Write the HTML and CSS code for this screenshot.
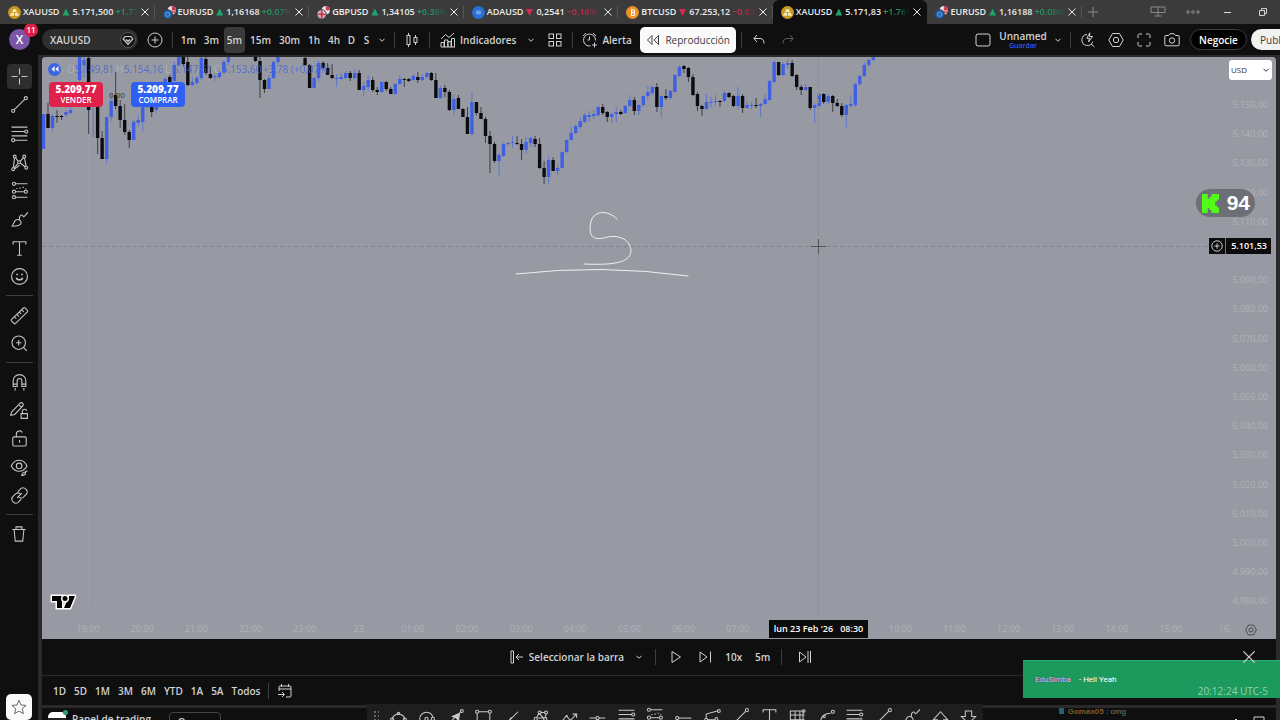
FILE: index.html
```html
<!DOCTYPE html>
<html lang="es">
<head>
<meta charset="utf-8">
<title>XAUUSD</title>
<link rel="stylesheet" href="styles.css">
</head>
<body>
<svg class="defs" aria-hidden="true">
  <symbol id="x" viewBox="0 0 10 10"><path d="M1.5 1.5l7 7M8.500 1.500l-7 7"/></symbol>
  <symbol id="chev" viewBox="0 0 8 8"><path d="M1.500 2.800l2.500 2.500 2.500-2.500"/></symbol>
  <symbol id="gold" viewBox="0 0 14 14"><circle cx="7" cy="7" r="7" fill="#c99a22" stroke="none"/><path d="M5.500 3.500h3l1 3h-5zM3.500 7.200h3v3.200h-4.500zM7.500 7.200h3l1.500 3.200h-4.500z" fill="#f5e9c4" stroke="none"/></symbol>
  <symbol id="eur" viewBox="0 0 14 14"><circle cx="9.500" cy="4.500" r="4.500" fill="#e8e3ea" stroke="none"/><path d="M9.500 0a4.500 4.500 0 0 1 4.500 4.500h-4.500z" fill="#c93a4c" stroke="none"/><path d="M9 7h5M9 5.500h5" stroke="#c93a4c"/><circle cx="5" cy="9" r="5" fill="#1c61b4" stroke="#3b3b3b"/><circle cx="5" cy="9" r="2.200" stroke="#6fa8df"/></symbol>
  <symbol id="gbp" viewBox="0 0 14 14"><circle cx="9.500" cy="4.500" r="4.500" fill="#e8e3ea" stroke="none"/><path d="M9.500 0a4.500 4.500 0 0 1 4.500 4.500h-4.500z" fill="#c93a4c" stroke="none"/><circle cx="5" cy="9" r="5" fill="#e8d9de" stroke="#3b3b3b"/><path d="M5 4.500v9M.5 9h9" stroke="#c8334a" stroke-width="2"/><path d="M2 6l1 1M8 6l-1 1M2 12l1-1M8 12l-1-1" stroke="#31539b"/></symbol>
  <symbol id="ada" viewBox="0 0 14 14"><circle cx="7" cy="7" r="7" fill="#2a6fd6" stroke="none"/><path d="M4.500 5.500h5M4.500 8.500h5M4 7h6" stroke="#a9c8f5" stroke-width=".8"/></symbol>
  <symbol id="btc" viewBox="0 0 14 14"><circle cx="7" cy="7" r="7" fill="#ee9129" stroke="none"/><path d="M5.500 4h2.200a1.500 1.500 0 0 1 0 3H5.800h2.200a1.500 1.500 0 0 1 0 3.200H5.200M6 3v8" stroke="#fff" stroke-width="1.200"/></symbol>
  <symbol id="cross" viewBox="0 0 24 24"><path d="M12 2v7.500M12 14.500V22M2 12h7.500M14.500 12H22"/></symbol>
  <symbol id="line" viewBox="0 0 24 24"><circle cx="4" cy="20" r="2"/><circle cx="20" cy="4" r="2"/><path d="M5.500 18.500l13-13"/></symbol>
  <symbol id="fib" viewBox="0 0 24 24"><path d="M2 4h20M2 9.500h16.500M2 15h20M6 20.500h16"/><circle cx="20.500" cy="9.500" r="2"/><circle cx="4" cy="20.500" r="2"/></symbol>
  <symbol id="pattern" viewBox="0 0 24 24"><circle cx="6" cy="4.500" r="1.800"/><circle cx="18" cy="4.500" r="1.800"/><circle cx="4" cy="20.500" r="1.800"/><circle cx="20.500" cy="18.500" r="1.800"/><circle cx="11.500" cy="11.500" r="1.800"/><path d="M5.700 6.300l-1.500 12.400M7 6l3.300 4.200M13 10.200l4-4.200M18.300 6.300l2 10.500M10.200 13l-5 6M13 12.600l6 4.700M6 20l6-4.500"/></symbol>
  <symbol id="range" viewBox="0 0 24 24"><circle cx="5" cy="3.500" r="2"/><circle cx="5" cy="13.500" r="2"/><circle cx="5" cy="20.500" r="2"/><circle cx="20" cy="13.500" r="2"/><path d="M7 3.500h15M7 13.500h11M7 20.500h15M8 9.500h1.500M12 9h1.500M16 8h1.500M19.500 9.500h1"/></symbol>
  <symbol id="brush" viewBox="0 0 24 24"><path d="M2 20.500c3 0 2-8 7-8.500 3-.5 5 2 5 4 0 4-5 4.500-12 4.500zM12 12c-1-5 3-7 4-5s1 3 6.500-4"/></symbol>
  <symbol id="text" viewBox="0 0 24 24"><path d="M4 7V3.500h16V7M12 3.500v17M9 20.500h6"/></symbol>
  <symbol id="smile" viewBox="0 0 24 24"><circle cx="12" cy="12" r="10"/><path d="M8 13.500c1 3.500 7 3.500 8 0M9 8.500v2M15 8.500v2" stroke-width="2"/></symbol>
  <symbol id="ruler" viewBox="0 0 24 24"><path d="M2 17L17 2.500q1-1 2 0l3 3q1 1 0 2L7 22q-1 1-2 0l-3-3q-1-1 0-2zM6 14l2 2M9 11l2.500 2.500M12 8l2 2M15 5l2.500 2.500"/></symbol>
  <symbol id="zoom" viewBox="0 0 24 24"><circle cx="11" cy="11" r="8.500"/><path d="M17.300 17.300l4 4M7.500 11h7M11 7.500v7"/></symbol>
  <symbol id="magnet" viewBox="0 0 24 24"><path d="M4 17V10a8 8 0 0 1 16 0v7h-5v-7a3 3 0 0 0-6 0v7zM4 14h5M15 14h5M6.500 19v3M17.500 19v3"/></symbol>
  <symbol id="penlock" viewBox="0 0 24 24"><path d="M2 14L13 2.500q1.500-1 3 .5t.5 3L6 17l-5 1zM11 4.500l4 4M14 16h8v6h-8zM15.500 16v-3q.5-2.500 3-2.500t2.500 2"/></symbol>
  <symbol id="lock" viewBox="0 0 24 24"><rect x="3.500" y="10" width="17" height="11.500" rx="1.500"/><path d="M8 10V6.500a4 4 0 0 1 7.500-2M12 14v3.500"/></symbol>
  <symbol id="eye" viewBox="0 0 24 24"><path d="M1.500 10c5-9.500 15-9.500 20 0-5 9-15 9-20 0z"/><circle cx="11.500" cy="10" r="3.500"/><path d="M14 22c2 0 1-4 4-4s2 4-4 4zM19 18l3-2"/></symbol>
  <symbol id="link" viewBox="0 0 24 24"><path d="M10 7l4-4q3-2 6 1t1 6l-4 4q-3 2.500-6 0M14 17l-4 4q-3 2-6-1t-1-6l4-4q3-2.500 6 0M9 15l6-6"/></symbol>
  <symbol id="trash" viewBox="0 0 24 24"><path d="M3 6h18M5.500 6l1.500 15.500h10L18.500 6M8 6V2.500h8V6"/></symbol>
  <symbol id="star" viewBox="0 0 24 24"><path d="M12 2l3 7 7.500.6-5.700 5 1.800 7.400-6.600-4-6.600 4 1.800-7.400-5.700-5L9 9z"/></symbol>
  <symbol id="gem" viewBox="0 0 16 16"><circle cx="8" cy="8" r="7.500" fill="#171717" stroke="#555"/><path d="M5 4.500h6l1.800 2.500L8 12.300 3.200 7zM6 7.500l2 2 2-2" stroke-width="1.200"/></symbol>
  <symbol id="plus" viewBox="0 0 16 16"><circle cx="8" cy="8" r="7"/><path d="M4.500 8h7M8 4.500v7"/></symbol>
  <symbol id="candles" viewBox="0 0 16 16"><rect x="3" y="3.500" width="3" height="9"/><rect x="10" y="5.500" width="3" height="5"/><path d="M4.500 1v2.500M4.500 12.500V15M11.500 3v2.500M11.500 10.500V13"/></symbol>
  <symbol id="indic" viewBox="0 0 16 16"><path d="M1 15V10.500h3V15M4.500 15V8h3.300v7M8 15V9.500h3V15M11.500 15V6.500h3V15M1 15h14M1 7l4.500-4.500 3.500 3L14 1"/></symbol>
  <symbol id="grid" viewBox="0 0 16 16"><rect x="2" y="2" width="4.500" height="4.500"/><rect x="9.500" y="2" width="4.500" height="4.500"/><rect x="2" y="9.500" width="4.500" height="4.500"/><rect x="9.500" y="9.500" width="4.500" height="4.500"/></symbol>
  <symbol id="alarm" viewBox="0 0 16 16"><path d="M8.500 14A6 6 0 1 1 13.500 8.500M7.500 4.500V8h-2M1 4l3-3M11 1l3 3M12.500 10.500v5M10 13h5"/></symbol>
  <symbol id="rew" viewBox="0 0 16 16"><path d="M7 3.500v9L2.500 8zM13.500 3.500v9L9 8z"/></symbol>
  <symbol id="undo" viewBox="0 0 16 16"><path d="M6 3L3 6.500 6 10M3 6.500h6q4 0 4 5"/></symbol>
  <symbol id="redo" viewBox="0 0 16 16"><path d="M10 3l3 3.500-3 3.500M13 6.500H7q-4 0-4 5"/></symbol>
  <symbol id="square" viewBox="0 0 16 16"><rect x="1" y="2" width="14" height="12" rx="2"/></symbol>
  <symbol id="quick" viewBox="0 0 16 16"><path d="M7 2.500a5.500 5.500 0 1 0 5.700 7M11 12l3.500 3M9.800.8L6.800 6.300h2.700L8.500 10l4-5.500h-3z"/></symbol>
  <symbol id="hex" viewBox="0 0 16 16"><path d="M4.500 1.500h7L15.200 8l-3.700 6.500h-7L.8 8z"/><circle cx="8" cy="8" r="2.700"/></symbol>
  <symbol id="full" viewBox="0 0 16 16"><path d="M2 6V3.500Q2 2 3.500 2H6M10 2h2.500Q14 2 14 3.500V6M14 10v2.500q0 1.500-1.500 1.500H10M6 14H3.500Q2 14 2 12.500V10"/></symbol>
  <symbol id="camera" viewBox="0 0 16 16"><path d="M.8 4.500Q.8 3.500 2 3.500h2.500L6 1.700h4l1.500 1.800H14q1.200 0 1.200 1v8q0 1.300-1.200 1.300H2q-1.200 0-1.200-1.300z"/><circle cx="8" cy="8.500" r="2.700"/></symbol>
  <symbol id="screens" viewBox="0 0 16 12"><path d="M1 1h14v5.500H1zM8 1v9M4.500 10h7"/></symbol>
  <symbol id="dots" viewBox="0 0 16 6"><circle cx="3" cy="3" r="1.300"/><circle cx="8" cy="3" r="1.300"/><circle cx="13" cy="3" r="1.300"/></symbol>
  <symbol id="restore" viewBox="0 0 10 10"><path d="M1.500 3.500h5v5h-5zM3.500 3V1.500h5v5H7"/></symbol>
  <symbol id="bar" viewBox="0 0 16 16"><path d="M2 2h2.500v12H2zM7 8h7M10 5L7 8l3 3"/></symbol>
  <symbol id="play" viewBox="0 0 16 16"><path d="M4 2.500l8.500 5.500L4 13.500z"/></symbol>
  <symbol id="step" viewBox="0 0 16 16"><path d="M3 3l7 5-7 5zM13.500 2.500v11"/></symbol>
  <symbol id="last" viewBox="0 0 16 16"><path d="M2.500 3l6.500 5-6.500 5zM11 2v12M13.500 2v12"/></symbol>
  <symbol id="cal" viewBox="0 0 16 16"><path d="M2 8V4q0-1 1-1h10q1 0 1 1v9q0 1-1 1H9M2 6h12M4.500 1v3M11.500 1v3M1 11.500h6M5 9l2.500 2.500L5 14"/></symbol>
  <symbol id="b-ell" viewBox="0 0 24 24"><path d="M4 16a8 7 0 0 1 16 0"/><circle cx="12" cy="8" r="1.500"/><circle cx="4" cy="16" r="2"/><circle cx="20" cy="16" r="2"/></symbol>
  <symbol id="b-circ" viewBox="0 0 24 24"><circle cx="12" cy="15" r="8.500"/><circle cx="12" cy="15" r="2"/><circle cx="20" cy="15" r="2" fill="#1e1e1e"/></symbol>
  <symbol id="b-arrow" viewBox="0 0 24 24"><path d="M4 21l7-8M16 9l3-3"/><path d="M8 12l9-4-1 9-3-3z" fill="currentColor"/><circle cx="20" cy="5" r="1.800"/></symbol>
  <symbol id="b-rect" viewBox="0 0 24 24"><path d="M4 8v14M20 8v14M6 6h12"/><circle cx="4" cy="6" r="2"/><circle cx="20" cy="6" r="2"/></symbol>
  <symbol id="b-brush" viewBox="0 0 24 24"><path d="M19 6L9 16M12 13c-4 0-3 5-7 7"/></symbol>
  <symbol id="b-poly" viewBox="0 0 24 24"><path d="M7 14l3-6M12 7h6M19 9l-1 5M9 14h7l-6-6"/><circle cx="6" cy="15" r="2"/><circle cx="11" cy="7" r="2"/><circle cx="19" cy="7" r="2"/><circle cx="18" cy="15" r="2"/></symbol>
  <symbol id="b-zig" viewBox="0 0 24 24"><path d="M2 19l6-8 5 6 8-8M16 9h5v5M7 11h3"/></symbol>
  <symbol id="b-hor" viewBox="0 0 24 24"><path d="M2 14h8M14 14h8"/><circle cx="12" cy="14" r="2"/></symbol>
  <symbol id="b-ray" viewBox="0 0 24 24"><path d="M6 14h16"/><circle cx="4" cy="14" r="2"/></symbol>
  <symbol id="b-fan" viewBox="0 0 24 24"><path d="M4 15V9l14-4M5 16h10"/><circle cx="20" cy="5" r="1.800"/><circle cx="4" cy="16" r="1.800"/><circle cx="17" cy="15" r="1.800"/></symbol>
  <symbol id="b-table" viewBox="0 0 24 24"><path d="M3 5h16v17H3zM3 10h18M3 16h18M9 5v17M15 5v17"/><circle cx="20" cy="5" r="1.500"/></symbol>
  <symbol id="b-curve" viewBox="0 0 24 24"><path d="M4 20C5 12 10 8 17 8"/><circle cx="20" cy="6" r="2"/><circle cx="9" cy="12" r="1.500"/></symbol>
  <symbol id="b-tri" viewBox="0 0 24 24"><path d="M12 6l9 10h-5v6H8v-6H3z"/></symbol>
  <symbol id="b-down" viewBox="0 0 24 24"><path d="M8 5h8v7h5l-9 9-9-9h5z"/></symbol>
</svg>

<nav class="tabs">
  <div class="tab-list" id="tab-list"></div>
  <button class="win new" aria-label="Nueva pestaña"><svg class="i16"><path d="M8 3v10M3 8h10"/></svg></button>
  <span class="grow"></span>
  <button class="win" aria-label="Pantallas"><svg class="i16 dim"><use href="#screens"/></svg></button>
  <button class="win more" aria-label="Más"><svg class="i16 dim"><use href="#dots"/></svg></button>
  <button class="win" aria-label="Minimizar"><span class="dash"></span></button>
  <button class="win" aria-label="Restaurar"><svg class="i10"><use href="#restore"/></svg></button>
</nav>

<header class="toolbar">
  <button class="avatar">X<span class="badge">11</span></button>
  <button class="symbol">XAUUSD<svg class="i16"><use href="#gem"/></svg></button>
  <button class="tool w34" aria-label="Comparar"><svg class="i16"><use href="#plus"/></svg></button>
  <i class="sep"></i>
  <div class="frames">
    <button>1m</button><button>3m</button><button class="on">5m</button><button class="wide">15m</button><button class="wide">30m</button><button class="slim">1h</button><button class="slim">4h</button><button class="one">D</button><button class="one">S</button><button class="one" aria-label="Intervalos"><svg class="i8"><use href="#chev"/></svg></button>
  </div>
  <i class="sep"></i>
  <button class="tool w34" aria-label="Velas"><svg class="i16"><use href="#candles"/></svg></button>
  <i class="sep"></i>
  <button class="tool label indic"><svg class="i16"><use href="#indic"/></svg>Indicadores</button>
  <button class="tool w24" aria-label="Favoritos"><svg class="i8"><use href="#chev"/></svg></button>
  <button class="tool w24" aria-label="Plantillas"><svg class="i16"><use href="#grid"/></svg></button>
  <i class="sep gap"></i>
  <button class="tool label alert"><svg class="i16"><use href="#alarm"/></svg>Alerta</button>
  <button class="replay"><svg class="i16"><use href="#rew"/></svg>Reproducción</button>
  <i class="sep gap"></i>
  <button class="tool w34" aria-label="Deshacer"><svg class="i16"><use href="#undo"/></svg></button>
  <button class="tool w24 faint" aria-label="Rehacer"><svg class="i16"><use href="#redo"/></svg></button>
  <span class="grow"></span>
  <button class="tool w34" aria-label="Diseño"><svg class="i16"><use href="#square"/></svg></button>
  <button class="layout">Unnamed<small>Guardar</small></button>
  <button class="tool w24" aria-label="Diseños"><svg class="i8"><use href="#chev"/></svg></button>
  <i class="sep"></i>
  <div class="actions">
    <button class="tool" aria-label="Buscar"><svg class="i16"><use href="#quick"/></svg></button>
    <button class="tool" aria-label="Ajustes"><svg class="i16"><use href="#hex"/></svg></button>
    <button class="tool" aria-label="Pantalla completa"><svg class="i16"><use href="#full"/></svg></button>
    <button class="tool" aria-label="Captura"><svg class="i16"><use href="#camera"/></svg></button>
  </div>
  <button class="trade">Negocie</button>
  <button class="publish">Publicar</button>
</header>

<main class="body">
  <aside class="side">
    <div class="set eight" data-icons="cross line fib pattern range brush text smile"></div>
    <hr>
    <div class="set two" data-icons="ruler zoom"></div>
    <hr>
    <div class="set five" data-icons="magnet penlock lock eye link"></div>
    <hr>
    <div class="set" data-icons="trash"></div>
    <span class="grow"></span>
    <button class="fav" aria-label="Favoritos"><svg class="i16"><use href="#star"/></svg></button>
  </aside>

  <section class="column">
    <div class="chart">
      <svg class="plot" id="plot"></svg>
      <div class="legend">
        <button class="back" aria-label="Reproducción"><svg class="i8" viewBox="0 0 8 8"><path d="M3.700 1v6L.5 4zM7.500 1v6L4.300 4z" fill="#fff" stroke="none"/></svg></button>
        <span><i>O</i>5.149,81</span><span><i>H</i>5.154,16</span><span><i>L</i>5.147,61</span><span><i>C</i>5.153,60</span><span>+3,78 (+0,07%)</span>
      </div>
      <div class="orders">
        <button class="sell"><b>5.209,77</b>VENDER</button>
        <span>0,00</span>
        <button class="buy"><b>5.209,77</b>COMPRAR</button>
      </div>
      <label class="currency"><select aria-label="Moneda"><option>USD</option></select><svg class="i8"><use href="#chev"/></svg></label>
      <div class="viewers"><svg viewBox="0 0 18 20"><path d="M0 0h6v5h2V3h2V0h8v6h-2v2h-2v4h2v2h2v6h-8v-3H8v-2H6v5H0z" fill="#53fc18"/></svg>94</div>
      <div class="price-tag"><svg class="i16"><use href="#plus"/></svg><span>5.101,53</span></div>
      <div class="time-tag">lun 23 Feb '26 &nbsp; 08:30</div>
      <svg class="tv" viewBox="0 0 26 16"><path d="M2 2h10v12H7V7H2zM19 2h6l-5 12h-6z" fill="#000" stroke="#fff" stroke-width="3" paint-order="stroke"/><circle cx="15" cy="4.500" r="2.500" fill="#000" stroke="#fff" stroke-width="3" paint-order="stroke"/></svg>
      <button class="axis-set" aria-label="Ajustes de escala"><svg class="i12"><use href="#hex"/></svg></button>
    </div>

    <div class="replay-bar">
      <span class="grow"></span>
      <button class="tool pick"><svg class="i16"><use href="#bar"/></svg>Seleccionar la barra<svg class="i8"><use href="#chev"/></svg></button>
      <i class="sep"></i>
      <button class="tool w29" aria-label="Reproducir"><svg class="i16"><use href="#play"/></svg></button>
      <button class="tool w29" aria-label="Avanzar"><svg class="i16"><use href="#step"/></svg></button>
      <button class="tool w29">10x</button>
      <button class="tool w29">5m</button>
      <i class="sep far"></i>
      <button class="tool w29" aria-label="Tiempo real"><svg class="i16"><use href="#last"/></svg></button>
      <span class="grow end"><button class="tool close" aria-label="Cerrar"><svg class="i16"><use href="#x"/></svg></button></span>
    </div>
    <div class="ranges">
      <button>1D</button><button>5D</button><button>1M</button><button>3M</button><button>6M</button><button>YTD</button><button>1A</button><button>5A</button><button>Todos</button>
      <i class="sep"></i>
      <button aria-label="Ir a la fecha"><svg class="i16"><use href="#cal"/></svg></button>
      <span class="grow"></span>
      <button class="clock">20:12:24 UTC-5</button>
    </div>
    <div class="bottom">
      <span class="broker"></span>
      <span class="panel-name">Panel de trading</span>
      <button class="chip">Operar</button>
      <span class="grow"></span>
      <p class="chat"><i></i><b>Gomax05</b> : omg</p>
      <svg class="ends" viewBox="0 0 40 12"><path d="M4 11l4-4 4 4M26 12V5h10v7"/></svg>
    </div>
  </section>

  <div class="toast"><b>EduSimba</b><span>- Hell Yeah</span></div>
  <div class="drawbar"><span class="grip"></span><div class="drawset" data-icons="b-ell b-circ b-arrow b-rect b-brush b-poly b-zig b-hor fib range b-ray b-fan line text b-table b-curve fib line brush b-tri b-down"></div></div>
</main>
<script src="chart.js"></script>
</body>
</html>
```
FILE: styles.css
```css
* { box-sizing: border-box; }
html, body { height: 100%; }
body {
  margin: 0;
  display: flex;
  flex-direction: column;
  overflow: hidden;
  background: #0f0f0f;
  color: #d2d2d2;
  font: 600 10px/14px "Open Sans", "Noto Sans", sans-serif;
}
button, select { font: inherit; color: inherit; background: none; border: 0; padding: 0; margin: 0; }
button { display: flex; align-items: center; justify-content: center; white-space: nowrap; flex: none; }
svg { fill: none; stroke: currentColor; flex: none; }
.defs { position: absolute; width: 0; height: 0; }
.grow { flex: 1; }
.i8 { width: 8px; height: 8px; }
.i10 { width: 10px; height: 10px; }
.i12 { width: 12px; height: 12px; }
.i16 { width: 16px; height: 16px; }
.dim { color: #8a8a8a; }

/* window tabs */
.tabs { display: flex; height: 24px; flex: none; background: #3b3b3b; }
.tab-list { flex: 0 1 1082px; display: grid; grid-template-columns: repeat(7, minmax(0, 1fr)); }
.tab { display: flex; align-items: center; gap: 2px; padding: 0 5px 0 8px; font-size: 9px; color: #ececec; position: relative; }
.tab.on { background: #0f0f0f; border-radius: 6px 6px 0 0; }
.tab > svg:first-child { width: 13px; height: 13px; }
.tab .name { font-weight: 600; }
.tab .tri { width: 7px; height: 7px; margin: 0 1px; background: #1fa36c; clip-path: polygon(50% 0, 100% 100%, 0 100%); }
.tab .pct { flex: 1; min-width: 0; overflow: hidden; white-space: nowrap; color: #1f9a68; -webkit-mask-image: linear-gradient(90deg, #000 50%, transparent); mask-image: linear-gradient(90deg, #000 50%, transparent); }
.tab.down .tri { background: #d52b50; transform: rotate(180deg); }
.tab.down .pct { color: #c92c50; }
.tab:not(.on)::after { content: ""; position: absolute; right: 0; top: 6px; height: 12px; border-right: 1px solid #555; }
.win { width: 35px; }
.new { width: 22px; color: #8a8a8a; }
.dash { width: 7px; border-top: 1px solid #ddd; }

/* main toolbar */
.toolbar { display: flex; align-items: center; height: 31px; flex: none; overflow: hidden; padding-left: 9px; }
.sep { width: 1px; height: 16px; background: #3d3d3d; flex: none; }
.sep.gap { margin-left: 5px; }
.tool { height: 26px; }
.w34 { width: 34px; }
.w29 { width: 29px; }
.w24 { width: 24px; }
.faint { color: #5c5c5c; }
.avatar { position: relative; width: 21px; height: 21px; border-radius: 50%; background: #7a55a8; color: #fff; font-size: 12px; }
.badge { position: absolute; left: 15px; top: -6px; width: 14px; height: 14px; border-radius: 50%; background: #d91f43; font-size: 8px; line-height: 14px; }
.symbol { width: 96px; height: 21px; margin-left: 12px; padding: 0 2px 0 8px; border-radius: 11px; background: #2e2e2e; justify-content: space-between; }
.frames { display: flex; margin: 0 5px 0 4px; }
.frames button { width: 23px; height: 26px; border-radius: 4px; }
.frames .on { background: #3a3a3a; width: 21px; margin: 0 1px; }
.frames .wide { width: 29px; }
.frames .slim { width: 20px; }
.frames .one { width: 15px; }
.label { gap: 4px; }
.indic { margin: 0 3px 0 10px; }
.alert { margin-left: 9px; }
.replay { width: 96px; height: 26px; margin-left: 8px; gap: 4px; border-radius: 5px; background: #fafafa; color: #3c3c3c; font-weight: 400; }
.layout { flex-direction: column; width: 46px; line-height: 12px; }
.layout small { font-size: 7px; line-height: 8px; color: #2f5bea; font-weight: 600; }
.actions { display: flex; margin: 0 4px 0 3px; }
.actions .tool { width: 28px; }
.trade { width: 57px; height: 21px; border: 1px solid #3d3d3d; border-radius: 11px; background: #000; color: #fff; }
.publish { width: 29px; height: 21px; margin-left: 4px; padding-left: 9px; border-radius: 11px 0 0 11px; background: #f2f2f2; color: #3c3c3c; justify-content: flex-start; overflow: hidden; font-weight: 400; }

/* body */
.body { position: relative; display: flex; flex: 1; min-height: 0; }
.side { width: 38px; flex: none; display: flex; flex-direction: column; padding-top: 7px; color: #c4c4c4; }
.side .set { display: grid; grid-auto-rows: 1fr; height: 28px; }
.side .eight { height: 229px; }
.side .two { height: 57px; }
.side .five { height: 142px; }
.side .set button { justify-self: center; align-self: center; width: 25px; height: 25px; border-radius: 4px; }
.side .set button svg { width: 19px; height: 19px; stroke-width: 1.400; }
.side .two svg, .side .five svg, .side .set:last-of-type svg { width: 18px; height: 18px; }
.side .eight button:first-child { background: #2e2e2e; }
.side hr { width: 27px; margin: 4px auto 5px; border: 0; border-top: 1px solid #3d3d3d; }
.fav { width: 26px; height: 26px; align-self: center; border-radius: 5px; background: #fafafa; color: #222; }
.column { flex: 1; min-width: 0; display: flex; flex-direction: column; background: #0f0f0f; border: 4px solid #2a2a2a; border-width: 2px 4px 0 4px; }
.chart { position: relative; flex: 1; min-height: 0; background: #989aa3; border-radius: 3px 3px 0 0; overflow: hidden; }
.plot { display: block; width: 100%; height: 100%; }
.plot text { fill: #b0b2ba; stroke: none; font-size: 9px; font-weight: 400; }
.legend { position: absolute; left: 6px; top: 5px; display: flex; align-items: center; gap: 1px; color: #4964d8; font-weight: 400; opacity: .85; }
.legend span { width: 48px; white-space: nowrap; }
.legend i { display: inline-block; width: 8px; font-style: normal; color: #b2b4bc; }
.back { width: 13px; height: 13px; margin-right: 5px; border-radius: 50%; background: #2b5cf2; }
.orders { position: absolute; left: 7px; top: 25px; display: flex; align-items: center; color: #333; font-weight: 400; font-size: 8px; }
.orders span { width: 28px; text-align: center; }
.orders button { width: 54px; height: 25px; flex-direction: column; border-radius: 4px; color: #fff; font-size: 8px; font-weight: 600; line-height: 10px; }
.orders b { font-size: 10px; line-height: 11px; }
.sell { background: #e0214a; }
.buy { background: #2e60f6; }
.currency { position: absolute; right: 4px; top: 3px; width: 43px; height: 20px; display: flex; align-items: center; padding: 0 2px; border-radius: 3px; background: #fff; color: #333; font-weight: 400; font-size: 8px; }
.currency select { flex: 1; min-width: 0; appearance: none; }
.viewers { position: absolute; right: 21px; top: 132px; height: 28px; width: 59px; display: flex; align-items: center; justify-content: space-between; padding: 0 5px 0 6px; border-radius: 14px; background: #6d6f77; color: #fff; font: 700 21px/28px "Liberation Sans", sans-serif; }
.viewers svg { width: 17px; height: 19px; stroke: none; }
.price-tag { position: absolute; right: 5px; top: 181px; display: flex; align-items: center; height: 16px; background: #0c0c0c; color: #fff; font-size: 9px; }
.price-tag svg { width: 12px; height: 12px; margin: 0 2px; }
.price-tag span { padding: 0 4px 0 5px; border-left: 1px solid #777; line-height: 16px; }
.time-tag { position: absolute; left: 727px; bottom: 1px; width: 99px; height: 18px; background: #0c0c0c; color: #fff; font-size: 9px; line-height: 18px; text-align: center; white-space: nowrap; }
.tv { position: absolute; left: 8px; bottom: 29px; width: 26px; height: 16px; }
.axis-set { position: absolute; right: 19px; bottom: 3px; color: #333; }
.replay-bar { display: flex; align-items: center; height: 37px; flex: none; padding-left: 10px; border-bottom: 1px solid #2b2b2b; }
.replay-bar .sep { margin-left: 12px; margin-right: 5px; }
.replay-bar .far { margin-left: 4px; margin-right: 8px; }
.pick { gap: 4px; }
.pick .i8 { margin-left: 7px; }
.end { display: flex; justify-content: flex-end; }
.close { position: relative; z-index: 3; width: 55px; height: 26px; }
.close svg { stroke-width: .800; }
.ranges { display: flex; align-items: center; height: 29px; flex: none; padding-left: 11px; gap: 8px; }
.ranges .clock { position: relative; z-index: 3; margin-right: 8px; color: #8fd3b1; font-weight: 400; }
.bottom { display: flex; align-items: flex-start; height: 15px; flex: none; border-top: 3px solid #2a2a2a; padding: 4px 8px 0 6px; overflow: hidden; position: relative; }
.broker { width: 18px; height: 18px; flex: none; border-radius: 5px; background: #fff; border-bottom: 12px solid #222; position: relative; }
.broker::after { content: ""; position: absolute; right: -2px; top: -2px; width: 5px; height: 5px; border-radius: 50%; background: #2a9d75; }
.panel-name { margin-left: 6px; }
.chip { width: 52px; height: 20px; margin-left: 18px; border: 1px solid #444; border-radius: 4px; }
.chat { margin: -6px 102px 0 0; font: 400 8px/12px "Liberation Sans", sans-serif; color: #777; z-index: 3; }
.chat b { color: #7e5c24; }
.chat i { display: inline-block; width: 5px; height: 6px; margin-right: 4px; background: #23627a; }
.ends { width: 40px; height: 12px; }
.toast { position: absolute; right: 0; bottom: 22px; width: 257px; height: 38px; display: flex; align-items: center; gap: 8px; padding-left: 12px; border-top: 1px solid #2eae72; background: #1c995c; color: #fff; font: 400 8px/12px Roboto, sans-serif; z-index: 2; }
.toast b { color: #e3b6f4; font-weight: 400; text-shadow: 0 0 1px #5b2a86; }
.drawbar { position: absolute; left: 367px; bottom: 0; width: 616px; height: 16px; display: flex; padding-top: 2px; background: #1e1e1e; color: #c9c9c9; overflow: hidden; z-index: 1; }
.grip { width: 6px; height: 14px; margin: 4px 5px 0 6px; background: radial-gradient(circle, #666 1px, transparent 1px) 0 0 / 4px 4px; }
.drawset { flex: 1; display: grid; grid-auto-flow: column; grid-auto-columns: 1fr; }
.drawset button { height: 20px; }
.drawset svg { width: 19px; height: 19px; stroke-width: 1.300; }
```
FILE: chart.js
```js
const NS = "http://www.w3.org/2000/svg";

const tabs = [
  ["gold", "XAUUSD", "5.171,500", "+1.77%"],
  ["eur", "EURUSD", "1,16168", "+0.07%"],
  ["gbp", "GBPUSD", "1,34105", "+0.39%"],
  ["ada", "ADAUSD", "0,2541", "−0.16%", "down"],
  ["btc", "BTCUSD", "67.253,12", "−0.03%", "down"],
  ["gold", "XAUUSD", "5.171,83", "+1.76%", "on"],
  ["eur", "EURUSD", "1,16188", "+0.08%"]
];
document.getElementById("tab-list").innerHTML = tabs.map(([icon, name, price, pct, state = ""]) =>
  `<div class="tab ${state}"><svg><use href="#${icon}"/></svg><span class="name">${name}</span><span class="tri"></span><span>${price}</span><span class="pct">${pct}</span><button aria-label="Cerrar"><svg class="i10"><use href="#x"/></svg></button></div>`).join("");

document.querySelectorAll("[data-icons]").forEach(box => {
  box.innerHTML = box.dataset.icons.split(" ").map(id =>
    `<button aria-label="${id}"><svg><use href="#${id}"/></svg></button>`).join("");
});

// index, direction, body top, body bottom, wick top, wick bottom
const candles = `0u57,92,57,92 1d57,71,46,71 2u59,71,57,74 3d59,60,53,66 4d59,60,58,63 5u55,58,53,60 6u53,56,50,57 7u28,46,24,50 8u0,23,0,40 9u3,8,0,20
10d1,53,0,77 11u34,45,30,80 12d45,81,40,97 13d81,102,74,102 14u60,102,60,107 15u44,60,36,64 16d38,49,15,52 17d49,63,43,71 18d63,75,47,78 19d75,83,73,91
20u65,83,63,83 21u63,66,58,70 22u48,65,46,75 23u40,49,38,52 24d44,55,40,60 25u44,53,40,56 26u30,44,28,46 27u22,36,20,38 28d20,25,18,26 29u8,24,4,24
30u0,8,0,10 31d0,7,0,9 32d5,28,0,29 33u25,28,20,29 34u21,26,19,28 35u1,21,0,23 36d2,16,0,18 37d17,21,10,22 38u19,20,17,24 39u15,20,14,22
40u5,15,3,17 41u0,5,0,8 47d0,4,0,5 48d4,23,0,41 49d23,32,22,36 50u21,32,18,32 51u5,21,3,22 52u0,5,0,7 58d1,8,0,9 59d8,31,7,31
60u21,31,20,31 61u6,21,4,24 62d6,11,4,12 63d11,18,6,18 64d18,21,7,22 65u21,22,17,30 66u20,22,16,23 67u16,21,14,22 68d16,21,14,24 69u16,21,12,22
70d16,33,13,33 71u29,33,25,39 72u23,30,18,34 73d23,33,20,35 74d33,35,30,38 75u25,35,24,36 76d25,32,24,34 77d32,37,30,37 78u27,37,26,37 79u22,27,18,28
80d22,23,21,30 81d22,24,21,25 82u19,23,17,24 83d20,23,15,26 84u20,23,17,24 85u16,20,15,22 86d16,23,15,24 87d23,41,16,41 88u31,41,29,42 89d31,35,28,40
90d35,53,33,54 91u42,53,38,58 92d41,52,38,52 93d52,60,51,60 94d60,77,50,77 95u45,77,35,80 96d45,56,45,58 97d56,62,50,62 98d62,79,60,86 99d79,87,74,116
100d87,104,85,106 101u98,104,96,119 102u87,99,86,100 103u86,87,85,89 104u85,86,79,91 105d86,87,79,88 106d87,93,82,103 107u85,93,80,97 108u81,86,80,90 109d82,87,79,90
110d87,111,81,112 111d111,120,104,127 112u103,120,99,127 113d103,114,100,114 114u111,114,108,118 115u95,111,94,111 116u83,95,82,96 117u76,83,70,84 118u69,76,67,77 119u64,70,60,72
120u58,65,56,66 121u58,60,54,65 122u57,59,53,62 123u50,58,49,60 124d50,56,47,58 125d55,60,54,65 126u57,60,56,66 127u55,57,50,65 128d55,57,53,58 129u49,56,48,57
130u43,49,38,50 131d43,54,40,58 132u48,54,47,58 133u39,48,38,50 134u35,39,29,42 135u30,36,29,38 136d30,50,26,55 137u39,50,38,60 138d39,41,32,43 139u34,41,33,42
140u18,35,17,36 141u10,19,8,20 142d9,12,8,16 143d11,20,10,25 144d20,38,17,39 145d37,49,35,54 146d49,52,48,59 147u45,52,37,52 148u45,46,40,50 149u44,45,38,48
150d44,45,43,50 151u36,44,34,45 152d36,40,35,41 153d39,49,38,50 154u39,49,30,52 155d39,51,37,56 156u48,51,44,52 157u48,49,45,52 158d48,49,41,51 159u47,49,46,60
160u42,47,37,48 161u24,43,23,44 162u5,25,4,26 163d5,18,5,19 164u7,18,5,19 165u6,8,2,12 166d6,19,3,20 167d18,30,17,33 168d30,33,28,38 169u30,33,27,34
170d30,51,30,53 171u48,51,46,66 172u37,49,36,50 173d37,45,36,47 174u39,45,37,47 175d39,46,38,55 176d46,49,42,50 177d49,58,46,60 178u48,58,47,71 179u47,49,38,51
180u27,48,26,50 181u19,27,18,29 182u8,19,5,20 183u3,8,2,10 184u0,3,0,4`;

const plot = document.getElementById("plot");
function add(tag, attrs, text) {
  const el = document.createElementNS(NS, tag);
  for (const key in attrs) el.setAttribute(key, attrs[key]);
  if (text) el.textContent = text;
  plot.append(el);
}

// grid line and axis labels
const hours = ["19:00", "20:00", "21:00", "22:00", "23:00", "23", "01:00", "02:00", "03:00", "04:00", "05:00", "06:00", "07:00", "", "", "10:00", "11:00", "12:00", "13:00", "14:00", "15:00", "16:"];
hours.forEach((label, i) => {
  if (label) add("text", { x: 46 + i * 54.15, y: 575, "text-anchor": "middle" }, label);
});
for (let i = 0; i < 18; i++) {
  const price = 5150 - i * 10;
  if (price !== 5100) {
    const s = String(price);
    add("text", { x: "100%", dx: -8, y: Math.round(51 + i * 29.2), "text-anchor": "end" }, `${s[0]}.${s.slice(1)},00`);
  }
}
add("path", { d: "M46.500 0V550", stroke: "#9c9ea7" });

candles.split(/\s+/).forEach(row => {
  const [, index, dir, rest] = row.match(/^(\d+)([ud])(.+)$/);
  const [top, bottom, high, low] = rest.split(",").map(Number);
  const x = 1.5 + index * 4.51;
  const color = dir === "u" ? "#3f60e4" : "#0b0b10";
  add("path", { d: `M${x} ${high}V${low}`, stroke: color, "stroke-width": 0.8, opacity: 0.8 });
  add("rect", { x: x - 1.7, y: top, width: 3.4, height: bottom - top, fill: color, stroke: "none" });
});

// crosshair
add("path", { d: "M0 189.500H1168", stroke: "#83858e", "stroke-dasharray": "4 3" });
add("path", { d: "M776.500 0V560", stroke: "#8b8d96", "stroke-dasharray": "4 3" });
add("path", { d: "M769 189.500h15M776.500 182v15", stroke: "#55565c" });

// freehand strokes
add("path", { d: "M575 162C566 153 553 153 549 164C546 180 551 183 562 181C578 176 589 184 589 194C588 207 568 208 542 207M474 217Q560 207 646 219", stroke: "#f0f0f3", "stroke-width": 1, "stroke-linecap": "round" });
```
